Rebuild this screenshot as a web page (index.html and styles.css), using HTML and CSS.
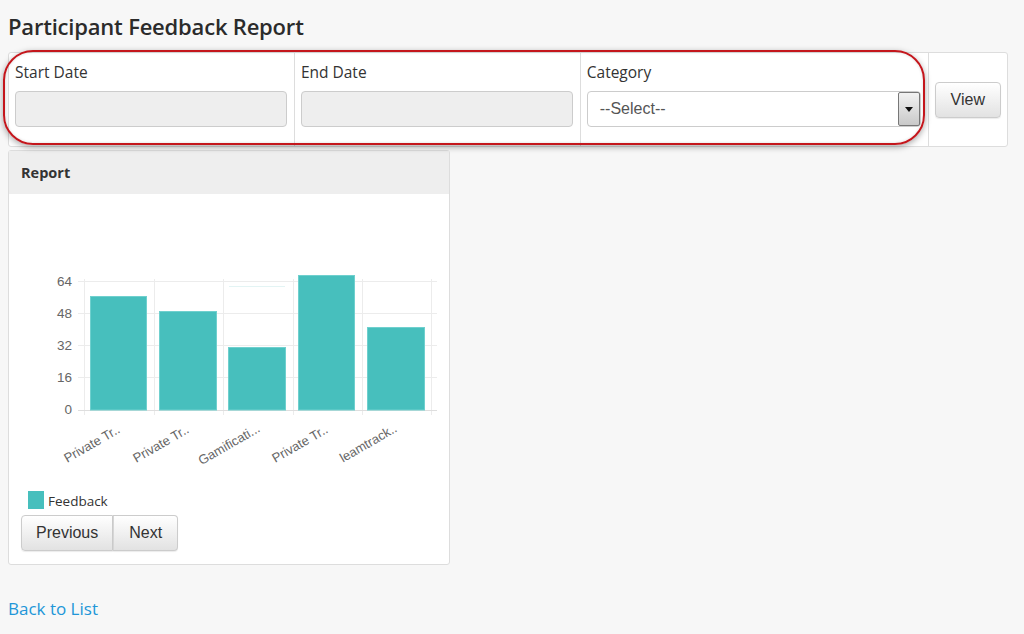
FILE: index.html
```html
<!DOCTYPE html>
<html>
<head>
<meta charset="utf-8">
<link rel="stylesheet" href="styles.css">
</head>
<body>
<div class="page">
  <h1 class="title">Participant Feedback Report</h1>

  <div class="filter-wrap">
    <div class="filter-panel">
      <div class="cell cell-a">
        <label class="lbl">Start Date</label>
        <div class="input"></div>
      </div>
      <div class="cell cell-b">
        <label class="lbl">End Date</label>
        <div class="input"></div>
      </div>
      <div class="cell cell-c">
        <label class="lbl">Category</label>
        <div class="select">
          <span class="select-text">--Select--</span>
          <span class="select-btn"><span class="tri"></span></span>
        </div>
      </div>
      <div class="cell cell-d">
        <button class="btn">View</button>
      </div>
    </div>
    <div class="annot"></div>
  </div>

  <div class="report">
    <div class="report-head">Report</div>
    <div class="report-body">
      <svg class="chart" width="440" height="291" viewBox="9 194 440 291" xmlns="http://www.w3.org/2000/svg">
        <g stroke="#ececec" stroke-width="1">
          <line x1="78" y1="281.5" x2="437" y2="281.5"/>
          <line x1="78" y1="313.5" x2="437" y2="313.5"/>
          <line x1="78" y1="345.5" x2="437" y2="345.5"/>
          <line x1="78" y1="377.5" x2="437" y2="377.5"/>
          <line x1="84.5" y1="279" x2="84.5" y2="415"/>
          <line x1="154.5" y1="279" x2="154.5" y2="415"/>
          <line x1="223.5" y1="279" x2="223.5" y2="415"/>
          <line x1="293.5" y1="279" x2="293.5" y2="415"/>
          <line x1="362.5" y1="279" x2="362.5" y2="415"/>
          <line x1="431.5" y1="279" x2="431.5" y2="415"/>
        </g>
        <line x1="78" y1="410.5" x2="437" y2="410.5" stroke="#dedede" stroke-width="1"/>
        <line x1="229" y1="286.5" x2="285" y2="286.5" stroke="#e3f4f4" stroke-width="1"/>
        <g fill="#47bfbd" stroke="#6fd0ce" stroke-width="1">
          <rect x="90.5" y="296.5" width="56" height="113.5"/>
          <rect x="159.5" y="311.5" width="57" height="98.5"/>
          <rect x="228.5" y="347.5" width="57" height="62.5"/>
          <rect x="298.5" y="275.5" width="56" height="134.5"/>
          <rect x="367.5" y="327.5" width="57" height="82.5"/>
        </g>
        <g class="ylab" text-anchor="end">
          <text x="72" y="285.5">64</text>
          <text x="72" y="317.5">48</text>
          <text x="72" y="349.5">32</text>
          <text x="72" y="381.5">16</text>
          <text x="72" y="413.5">0</text>
        </g>
        <g class="xlab" text-anchor="end">
          <text transform="translate(121 432) rotate(-30)">Private Tr..</text>
          <text transform="translate(190 432) rotate(-30)">Private Tr..</text>
          <text transform="translate(261 431) rotate(-30)">Gamificati...</text>
          <text transform="translate(329 432) rotate(-30)">Private Tr..</text>
          <text transform="translate(398 431) rotate(-30)">leamtrack..</text>
        </g>
      </svg>
      <div class="legend"><span class="swatch"></span><span class="legend-text">Feedback</span></div>
      <div class="btn-group">
        <button class="btn btn-left">Previous</button><button class="btn btn-right">Next</button>
      </div>
    </div>
  </div>

  <a class="back" href="#">Back to List</a>
</div>
</body>
</html>
```

FILE: styles.css
```css
* { box-sizing: border-box; }
html, body { margin: 0; padding: 0; background: #f7f7f7; }
body { font-family: "Open Sans", "Liberation Sans", sans-serif; color: #333; }
.page { padding: 0 8px; width: 1024px; height: 634px; overflow: hidden; }

.title {
  margin: 12px 0 12px 0;
  font-size: 22px;
  line-height: 28px;
  font-weight: 600;
  color: #2b2b2b;
  letter-spacing: -0.2px;
}

.filter-wrap { position: relative; }
.filter-panel {
  display: flex;
  width: 1000px;
  height: 95px;
  background: #fff;
  border: 1px solid #ddd;
  border-radius: 3px;
}
.cell {
  padding: 8px 6px 0 6px;
  border-right: 1px solid #ddd;
}
.cell-a { width: 286px; padding-right: 7px; }
.cell-b { width: 286px; padding-right: 7px; }
.cell-c { width: 348px; padding-right: 7px; }
.cell-d { flex: 1; border-right: none; display: flex; align-items: center; padding: 0 6px; }

.lbl { display: block; font-size: 15.5px; line-height: 22px; margin-bottom: 8px; color: #333; }
.input {
  height: 36px;
  background: #eee;
  border: 1px solid #ccc;
  border-radius: 4px;
}
.select {
  position: relative;
  height: 36px;
  background: #fff;
  border: 1px solid #ccc;
  border-radius: 4px;
  display: flex;
  align-items: center;
  padding-left: 12px;
}
.select-text { font-family: "Liberation Sans", Arial, sans-serif; font-size: 16px; color: #555; }
.select-btn {
  position: absolute;
  right: 0;
  top: 0;
  width: 22px;
  height: 34px;
  border: 1px solid #777;
  border-radius: 2px;
  background: linear-gradient(#f2f2f2, #c9c9c9);
  display: flex;
  align-items: center;
  justify-content: center;
}
.tri {
  width: 0; height: 0;
  border-left: 4px solid transparent;
  border-right: 4px solid transparent;
  border-top: 5px solid #111;
}

.btn {
  font-family: "Liberation Sans", Arial, sans-serif;
  font-size: 16px;
  color: #333;
  height: 36px;
  padding: 0 15px;
  border: 1px solid #ccc;
  border-radius: 4px;
  background: linear-gradient(#ffffff, #e2e2e2);
  box-shadow: 0 1px 1px rgba(0,0,0,0.08);
  cursor: pointer;
}

.annot {
  position: absolute;
  left: -5px;
  top: -2px;
  width: 922px;
  height: 95px;
  border: 2px solid #c4161c;
  border-radius: 30px;
  box-shadow: 0 2px 6px rgba(0,0,0,0.35), inset 0 0 3px rgba(0,0,0,0.15);
  pointer-events: none;
}

.report {
  margin-top: 3px;
  width: 442px;
  background: #fff;
  border: 1px solid #ddd;
  border-radius: 3px;
}
.report-head {
  height: 43px;
  line-height: 43px;
  padding-left: 12px;
  background: #eee;
  font-size: 14.5px;
  font-weight: 700;
  color: #333;
}
.report-body { padding: 0 0 13px 12px; }
.chart { display: block; margin-left: -12px; }
.ylab text { font-family: "Liberation Sans", Arial, sans-serif; font-size: 13.5px; fill: #666; }
.xlab text { font-family: "Liberation Sans", Arial, sans-serif; font-size: 13px; fill: #666; }

.legend { display: flex; align-items: flex-end; height: 19px; margin-top: 5px; margin-left: 7px; }
.swatch { width: 16px; height: 18px; background: #47bfbd; margin-right: 4px; }
.legend-text { font-size: 13.5px; line-height: 16px; color: #333; }

.btn-group { display: flex; margin-top: 6px; }
.btn-group .btn { padding: 0 14px; }
.btn-group .btn-right { padding: 0 15px 0 16px; }
.btn-left { border-radius: 4px 0 0 4px; }
.btn-right { border-radius: 0 4px 4px 0; border-left: none; box-shadow: inset 1px 0 0 #d6d6d6, 0 1px 1px rgba(0,0,0,0.08); }

.back {
  display: inline-block;
  margin-top: 33px;
  font-size: 17px;
  line-height: 22px;
  color: #2196d8;
  text-decoration: none;
}
```
